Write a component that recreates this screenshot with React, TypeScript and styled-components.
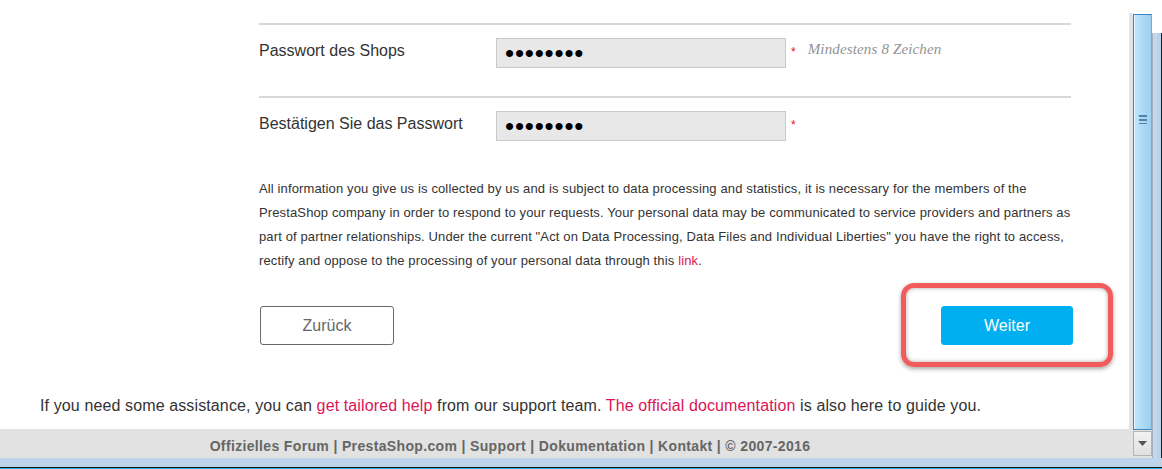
import React from 'react';
import styled, { createGlobalStyle } from 'styled-components';

const GlobalStyle = createGlobalStyle`
  html, body {
    margin: 0;
    padding: 0;
    background: #fff;
  }
  body {
    font-family: "Liberation Sans", Arial, sans-serif;
    overflow: hidden;
  }
`;

const colors = {
  text: '#333',
  muted: '#666',
  hint: '#929292',
  line: '#d8d8d8',
  link: '#dc1356',
  blue: '#00aff0',
  field: '#e8e8e8',
  fieldBorder: '#c9c9c9',
};

const Frame = styled.div`
  position: relative;
  width: 1162px;
  height: 469px;
  display: flex;
  flex-direction: column;
  overflow: hidden;
`;

const Viewport = styled.div`
  flex: 1;
  display: flex;
  min-height: 0;
`;

const Main = styled.div`
  width: 1129px;
  display: flex;
  flex-direction: column;
  background: #fff;
`;

const Content = styled.div`
  margin-left: 259px;
  width: 814px;
  padding-top: 23px;
`;

const FieldRow = styled.div<{ $bottom: number }>`
  display: flex;
  align-items: flex-start;
  width: 812px;
  border-top: 2px solid ${colors.line};
  padding: 13px 0 ${(p) => p.$bottom}px;
  &:last-of-type {
    border-bottom: 2px solid ${colors.line};
  }
`;

const Label = styled.label`
  width: 237px;
  padding-top: 4px;
  font-size: 16px;
  color: ${colors.text};
`;

const PasswordInput = styled.input`
  box-sizing: border-box;
  width: 290px;
  height: 30px;
  margin: 0;
  padding: 0 8px;
  background: ${colors.field};
  border: 1px solid ${colors.fieldBorder};
  border-radius: 0;
  font-family: "Liberation Sans", Arial, sans-serif;
  font-size: 26px;
  letter-spacing: 0.8px;
  color: #000;
  outline: none;
`;

const Required = styled.span`
  margin: 8px 0 0 5px;
  font-size: 12px;
  line-height: 12px;
  color: #ee1111;
`;

const Hint = styled.span`
  margin: 3px 0 0 12px;
  font-family: "Liberation Serif", "Times New Roman", serif;
  font-style: italic;
  font-size: 15px;
  letter-spacing: 0.15px;
  color: ${colors.hint};
`;

const Notice = styled.p`
  margin: 25px 0 0;
  width: 812px;
  white-space: nowrap;
  font-size: 13px;
  line-height: 24px;
  letter-spacing: 0.13px;
  color: ${colors.text};
`;

const Link = styled.a`
  color: ${colors.link};
  text-decoration: none;
`;

const Actions = styled.div`
  display: flex;
  justify-content: space-between;
  margin-top: 33px;
`;

const Button = styled.button<{ $primary?: boolean }>`
  box-sizing: border-box;
  width: ${(p) => (p.$primary ? 132 : 134)}px;
  height: 39px;
  margin-left: ${(p) => (p.$primary ? 0 : 1)}px;
  border-radius: 3px;
  border: 1px solid ${(p) => (p.$primary ? colors.blue : '#6a6a6a')};
  background: ${(p) => (p.$primary ? colors.blue : '#fff')};
  color: ${(p) => (p.$primary ? '#fff' : '#666')};
  font-family: "Liberation Sans", Arial, sans-serif;
  font-size: 16px;
  cursor: pointer;
`;

const Highlight = styled.div`
  position: absolute;
  left: 901px;
  top: 283px;
  width: 212px;
  height: 84px;
  box-sizing: border-box;
  border: 5px solid #f25b5b;
  border-radius: 13px;
  box-shadow: 0 2px 4px rgba(0, 0, 0, 0.35), inset 0 0 4px rgba(0, 0, 0, 0.35);
  pointer-events: none;
`;

const Help = styled.p`
  margin: 51px 0 0 40px;
  white-space: nowrap;
  font-size: 16px;
  line-height: 20px;
  letter-spacing: 0.12px;
  color: ${colors.text};
`;

const FooterBand = styled.div`
  margin-top: auto;
  background: #e1e2e1;
`;

const Footer = styled.footer`
  height: 29px;
  width: 1020px;
  display: flex;
  align-items: center;
  justify-content: center;
  padding-top: 4px;
  box-sizing: border-box;
  white-space: nowrap;
  font-size: 14px;
  font-weight: bold;
  letter-spacing: 0.35px;
  color: ${colors.muted};
`;

const Gutter = styled.div`
  width: 4px;
  margin-top: 13px;
  background: #e3e3e3;
`;

const ScrollBar = styled.div`
  width: 19px;
  display: flex;
  flex-direction: column;
  padding-top: 14px;
  background: linear-gradient(#fff 0 14px, #e3e3e3 14px);
`;

const Thumb = styled.div`
  flex: 1;
  box-sizing: border-box;
  border: 1px solid #3d86bd;
  border-right-color: #8aa8c0;
  background: linear-gradient(to right, #c4e7fb, #a9d8f6 60%, #9fd0f0);
  box-shadow: inset 1px 0 0 #e6f5fe;
  display: flex;
  justify-content: center;
  padding-top: 100px;
`;

const Grip = styled.div`
  width: 8px;
  height: 9px;
  background: repeating-linear-gradient(#3b6e92 0 2px, transparent 2px 4px);
  opacity: 0.8;
`;

const ArrowButton = styled.div`
  height: 25px;
  margin: 1px 0 2px;
  box-sizing: border-box;
  border: 1px solid #b4b4b4;
  background: linear-gradient(#f2f2f2, #e0e0e0);
  display: flex;
  align-items: center;
  justify-content: center;
`;

const Edge = styled.div`
  width: 10px;
  margin-top: 33px;
  box-sizing: border-box;
  border-left: 1px solid #9eb3c6;
  border-right: 1px solid #1b1b1b;
  background: linear-gradient(to right, #c9d6e3 0 4px, #b3d3ee 4px 8px, #3a8fd0 8px);
`;

const BottomBand = styled.div`
  height: 11px;
  box-sizing: border-box;
  background: #bed4eb;
  border-bottom: 1px solid #2bb0d8;
  box-shadow: inset 0 -1px 0 #151515;
`;

export default function App() {
  return (
    <Frame>
      <GlobalStyle />
      <Viewport>
        <Main>
          <Content>
            <FieldRow $bottom={28}>
              <Label htmlFor="pw">Passwort des Shops</Label>
              <PasswordInput id="pw" type="password" defaultValue="12345678" readOnly />
              <Required>*</Required>
              <Hint>Mindestens 8 Zeichen</Hint>
            </FieldRow>
            <FieldRow $bottom={11}>
              <Label htmlFor="pw2">Bestätigen Sie das Passwort</Label>
              <PasswordInput id="pw2" type="password" defaultValue="12345678" readOnly />
              <Required>*</Required>
            </FieldRow>
            <Notice>
              All information you give us is collected by us and is subject to data processing and statistics, it is necessary for the members of the
              <br />
              PrestaShop company in order to respond to your requests. Your personal data may be communicated to service providers and partners as
              <br />
              part of partner relationships. Under the current "Act on Data Processing, Data Files and Individual Liberties" you have the right to access,
              <br />
              rectify and oppose to the processing of your personal data through this <Link href="#">link</Link>.
            </Notice>
            <Actions>
              <Button>Zurück</Button>
              <Button $primary>Weiter</Button>
            </Actions>
          </Content>
          <Help>
            If you need some assistance, you can <Link href="#">get tailored help</Link> from our support team.{' '}
            <Link href="#">The official documentation</Link> is also here to guide you.
          </Help>
          <FooterBand>
            <Footer>Offizielles Forum | PrestaShop.com | Support | Dokumentation | Kontakt | © 2007-2016</Footer>
          </FooterBand>
        </Main>
        <Gutter />
        <ScrollBar>
          <Thumb>
            <Grip />
          </Thumb>
          <ArrowButton>
            <svg width="9" height="5" viewBox="0 0 9 5">
              <path d="M0 0h9L4.5 5z" fill="#555" />
            </svg>
          </ArrowButton>
        </ScrollBar>
        <Edge />
      </Viewport>
      <BottomBand />
      <Highlight />
    </Frame>
  );
}
